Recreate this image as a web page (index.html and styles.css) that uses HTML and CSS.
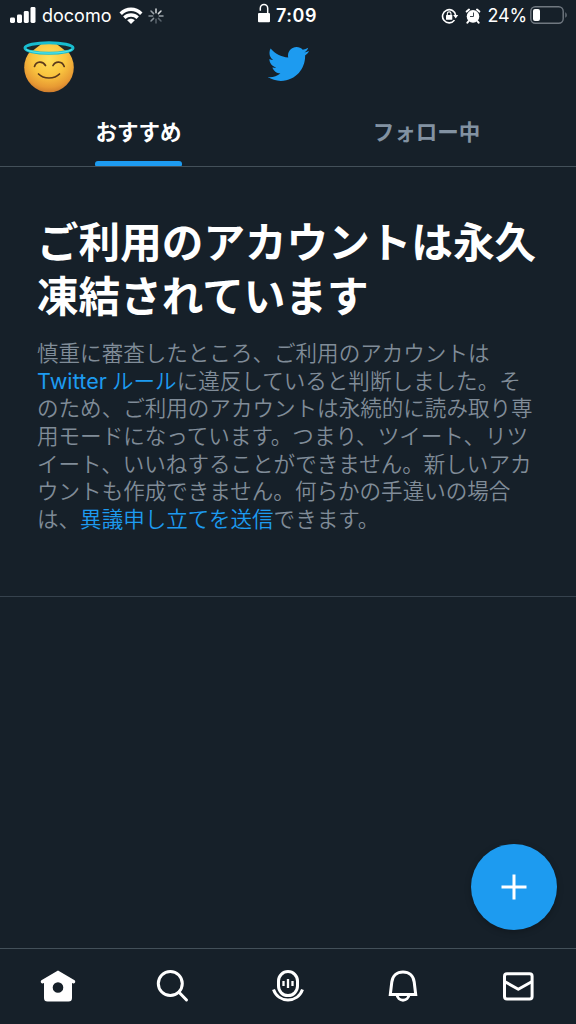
FILE: index.html
```html
<!DOCTYPE html>
<html lang="ja">
<head>
<meta charset="utf-8">
<title>Twitter</title>
<link rel="stylesheet" href="styles.css">
</head>
<body>
<div class="screen">
  <div class="status">
    <div class="status-left">
      <svg class="signal" width="26" height="17" viewBox="0 0 26 17" fill="#fff"><rect x="0" y="10.5" width="5" height="5.5" rx="1.4"/><rect x="7" y="7.5" width="5" height="8.5" rx="1.4"/><rect x="13.8" y="4" width="5" height="12" rx="1.4"/><rect x="20.5" y="0" width="5" height="16" rx="1.4"/></svg>
      <span class="carrier">docomo</span>
      <svg class="wifi" width="24" height="18" viewBox="0 0 24 18" fill="none" stroke="#fff" stroke-width="3.4"><path d="M1.7 6.7C7.5.8 16.5.8 22.3 6.7M5.3 10.8c3.8-3.7 9.6-3.7 13.4 0"/><path d="M12 17l-3.8-3.8c2.2-2 5.4-2 7.6 0z" fill="#fff" stroke="none"/></svg>
      <svg class="spinner" width="16" height="16" viewBox="0 0 16 16" stroke-width="1.5" stroke-linecap="round"><path stroke="#d5d9dc" d="M8 1v3.7M13 3l-2.600 2.600"/><path stroke="#98a0a7" d="M15 8h-3.700M3 3l2.600 2.600"/><path stroke="#59636c" d="M13 13l-2.600-2.600M8 15v-3.700"/><path stroke="#858e96" d="M3 13l2.600-2.600M1 8h3.700"/></svg>
    </div>
    <div class="status-center">
      <svg width="14" height="20" viewBox="0 0 14 20"><rect x="1" y="10" width="12" height="9.300" rx="1" fill="#fff"/><path d="M3.300 7.800V5.200a3.700 3.700 0 0 1 7.400 0V10" fill="none" stroke="#fff" stroke-width="1.500"/></svg>
      <span class="clock">7:09</span>
    </div>
    <div class="status-right">
      <svg width="18" height="16" viewBox="0 0 18 16"><path d="M13.500 12.100A6.600 6.600 0 1 1 14.700 7.500" fill="none" stroke="#fff" stroke-width="1.600"/><path d="M12.200 7h5l-2.500 3.500z" fill="#fff"/><rect x="5" y="7" width="6.300" height="4.700" rx=".5" fill="#fff"/><path d="M6.300 7.500V5.700a1.850 1.850 0 0 1 3.700 0v1.800" fill="none" stroke="#fff" stroke-width="1.100"/></svg>
      <svg class="alarm" width="16" height="16" viewBox="0 0 16 16"><circle cx="8" cy="8.400" r="6.300" fill="#fff"/><path d="M1.700 3.600L4 1.600M12 1.600l2.300 2M3.700 13l-1.300 1.700M12.300 13l1.300 1.700" stroke="#fff" stroke-width="2" stroke-linecap="round"/><path d="M8.500 4.500v4H5" fill="none" stroke="#3a434c" stroke-width="1"/></svg>
      <span class="percent">24%</span>
      <svg class="battery" width="38" height="18" viewBox="0 0 38 18"><rect x=".8" y=".8" width="32.400" height="16.400" rx="4.500" fill="none" stroke="#707880" stroke-width="1.400"/><rect x="3" y="3" width="7" height="12" rx="2" fill="#fff"/><path d="M35.300 6.200c1.900 1 1.900 4.600 0 5.600z" fill="#707880"/></svg>
    </div>
  </div>

  <header class="header">
    <svg class="avatar" width="54" height="54" viewBox="0 0 54 54">
      <defs>
        <radialGradient id="face" cx=".5" cy=".32" r=".68"><stop offset="0" stop-color="#ffe05a"/><stop offset=".5" stop-color="#fac53f"/><stop offset=".85" stop-color="#e89a33"/><stop offset="1" stop-color="#cf7d2d"/></radialGradient>
      </defs>
      <circle cx="27" cy="27.500" r="24.800" fill="url(#face)"/>
      <path d="M5 8.500C10 4 17 3.500 20 3.500L11 10.500z" fill="#1d2a2b"/>
      <path d="M49 8.500C44 4 37 3.500 34 3.500L43 10.500z" fill="#1d2a2b"/>
      <ellipse cx="27" cy="8" rx="24" ry="5.300" fill="none" stroke="#18bdd0" stroke-width="3"/>
      <path d="M4 9.500C11 14.300 43 14.300 50 9.500" fill="none" stroke="#55e4e8" stroke-width="1.200"/>
      <path d="M12.500 26.500c1.500-5.700 8.500-5.700 11-1M31 25.500c2.300-4.700 9.300-4.700 11.200 1M16.500 34c5 5.300 16 5.300 21 0" fill="none" stroke="#5c3a1c" stroke-width="1.700" stroke-linecap="round"/>
    </svg>
    <svg class="bird" width="44" height="44" viewBox="0 0 24 24" fill="#1d9bf0"><path d="M23.643 4.937c-.835.37-1.732.62-2.675.733.962-.576 1.700-1.490 2.048-2.578-.9.534-1.897.922-2.958 1.130-.85-.904-2.060-1.470-3.400-1.470-2.572 0-4.658 2.086-4.658 4.660 0 .364.042.718.120 1.060-3.873-.195-7.304-2.050-9.602-4.868-.4.690-.63 1.490-.63 2.342 0 1.616.823 3.043 2.072 3.878-.764-.025-1.482-.234-2.110-.583v.060c0 2.257 1.605 4.140 3.737 4.568-.392.106-.803.162-1.227.162-.3 0-.593-.028-.877-.082.593 1.850 2.313 3.198 4.352 3.234-1.595 1.250-3.604 1.995-5.786 1.995-.376 0-.747-.022-1.112-.065 2.062 1.323 4.510 2.093 7.140 2.093 8.570 0 13.255-7.098 13.255-13.254 0-.2-.005-.402-.014-.602.910-.658 1.700-1.477 2.323-2.410z"/></svg>
  </header>

  <nav class="tabs">
    <div class="tab"><span class="tab-label active">おすすめ</span></div>
    <div class="tab"><span class="tab-label">フォロー中</span></div>
  </nav>

  <section class="notice">
    <h1 class="title">ご利用のアカウントは永久<br>凍結されています</h1>
    <p class="message">慎重に審査したところ、ご利用のアカウントは<br><a class="link"><span class="latin">Twitter</span>ルール</a>に違反していると判断しました。そ<br>のため、ご利用のアカウントは永続的に読み取り専<br>用モードになっています。つまり、ツイート、リツ<br>イート、いいねすることができません。新しいアカ<br>ウントも作成できません。何らかの手違いの場合<br>は、<a class="link">異議申し立てを送信</a>できます。</p>
  </section>

  <main class="feed">
    <div class="compose">
      <svg width="26" height="26" viewBox="0 0 26 26"><path d="M13 .5v25M.5 13h25" stroke="#fff" stroke-width="3"/></svg>
    </div>
  </main>

  <nav class="bottom">
    <svg width="40" height="40" viewBox="0 0 40 40"><path fill="#fff" fill-rule="evenodd" d="M20 4.500l16.600 9.800c1.300.9.500 3.400-1.100 3.100L34 17.100V32q0 3.500-3.500 3.500h-21Q6 35.500 6 32V17.100L4.500 17.400c-1.600.3-2.400-2.200-1.100-3.100zM20 16.200a5.300 5.300 0 1 0 0 10.600 5.300 5.300 0 0 0 0-10.600z"/></svg>
    <svg width="40" height="40" viewBox="0 0 40 40" fill="none" stroke="#fff" stroke-width="3" stroke-linecap="round"><circle cx="17.300" cy="17.500" r="12"/><path d="M26 26.200l7.500 7.800"/></svg>
    <svg width="40" height="40" viewBox="0 0 40 40" fill="none" stroke="#fff" stroke-width="3"><rect x="10.500" y="5.600" width="19" height="24" rx="9.500"/><path d="M5.500 23.500c5 14 24 14 29 0"/><path d="M15.500 15v5M20 13v9M24.500 15v5" stroke-width="2.300"/></svg>
    <svg width="40" height="40" viewBox="0 0 40 40" fill="none" stroke="#fff" stroke-width="3"><path d="M7.300 28.500h25.400L31.200 16C30.500 9.500 26 6 20 6S9.500 9.500 8.800 16z"/><path d="M14 28.500c.5 7.500 11.500 7.500 12 0"/></svg>
    <svg width="40" height="40" viewBox="0 0 40 40" fill="none" stroke="#fff" stroke-width="3" stroke-linejoin="round"><rect x="6.500" y="7.700" width="27.600" height="25.300" rx="2.500"/><path d="M6.500 15.500l13.800 7.700 13.800-7.700"/></svg>
  </nav>
</div>
</body>
</html>
```
FILE: styles.css
```css
* { box-sizing: border-box; }
body {
  margin: 0;
  background: #162029;
  color: #fff;
  font-family: Inter, "Noto Sans CJK JP", sans-serif;
}
svg { display: block; flex: none; }
.screen { width: 576px; height: 1024px; display: flex; flex-direction: column; overflow: hidden; }
.status { height: 32px; flex: none; display: grid; grid-template-columns: 247px auto 1fr; padding: 0 8px 0 10px; line-height: 32px; white-space: nowrap; }
.status-left, .status-center, .status-right { display: flex; align-items: center; }
.status-center { gap: 5px; }
.status-center svg { margin-top: -6px; }
.status-right { justify-content: flex-end; }
.signal { margin-top: -1px; }
.carrier { width: 69px; margin-left: 6px; font-size: 18px; letter-spacing: 0; }
.wifi { margin-left: 8px; }
.spinner { margin-left: 5px; }
.clock { font-size: 18px; font-weight: 600; letter-spacing: 0.5px; }
.alarm { margin-left: 6px; }
.percent { margin-left: 7px; font-size: 18px; letter-spacing: -0.2px; }
.battery { margin-left: 3px; margin-top: -2px; }
.header { height: 68px; flex: none; display: grid; grid-template-columns: 1fr auto 1fr; align-items: start; padding: 8px 22px; }
.bird { margin-top: 2px; }
.tabs { height: 67px; flex: none; display: grid; grid-template-columns: 277px 299px; border-bottom: 1px solid #435059; }
.tab { display: flex; justify-content: center; }
.tab-label { height: 66px; font: 700 21.5px/62px "Noto Sans CJK JP", sans-serif; color: #8292a2; }
.active { color: #fff; position: relative; }
.active::after { content: ""; position: absolute; left: 0; right: 0; bottom: 0; height: 5px; border-radius: 3px 3px 1px 1px; background: #1d9bf0; }
.notice { height: 430px; flex: none; padding: 46px 36px 0 37px; border-bottom: 1px solid #36424d; white-space: nowrap; }
.title { margin: 0; font: 700 41.6px/54px "Noto Sans CJK JP", sans-serif; }
.message { margin: 17px 0 0; font: 350 21.55px/27.65px "Noto Sans CJK JP", sans-serif; color: #808c98; }
.link { color: #1d9bf0; }
.latin { display: inline-block; width: 75px; font-family: Inter, sans-serif; line-height: 20px; font-size: 21.5px; font-weight: 400; letter-spacing: 0.1px; }
.feed { flex: 1; display: flex; justify-content: flex-end; align-items: flex-end; padding: 0 19px 18px; }
.compose { width: 86px; height: 86px; border-radius: 50%; background: #1d9bf0; display: grid; place-items: center; box-shadow: 0 2px 6px rgba(0, 0, 0, 0.25); }
.bottom { height: 76px; flex: none; display: grid; grid-template-columns: repeat(5, 1fr); justify-items: center; padding-top: 17px; border-top: 1px solid #435059; }
```
